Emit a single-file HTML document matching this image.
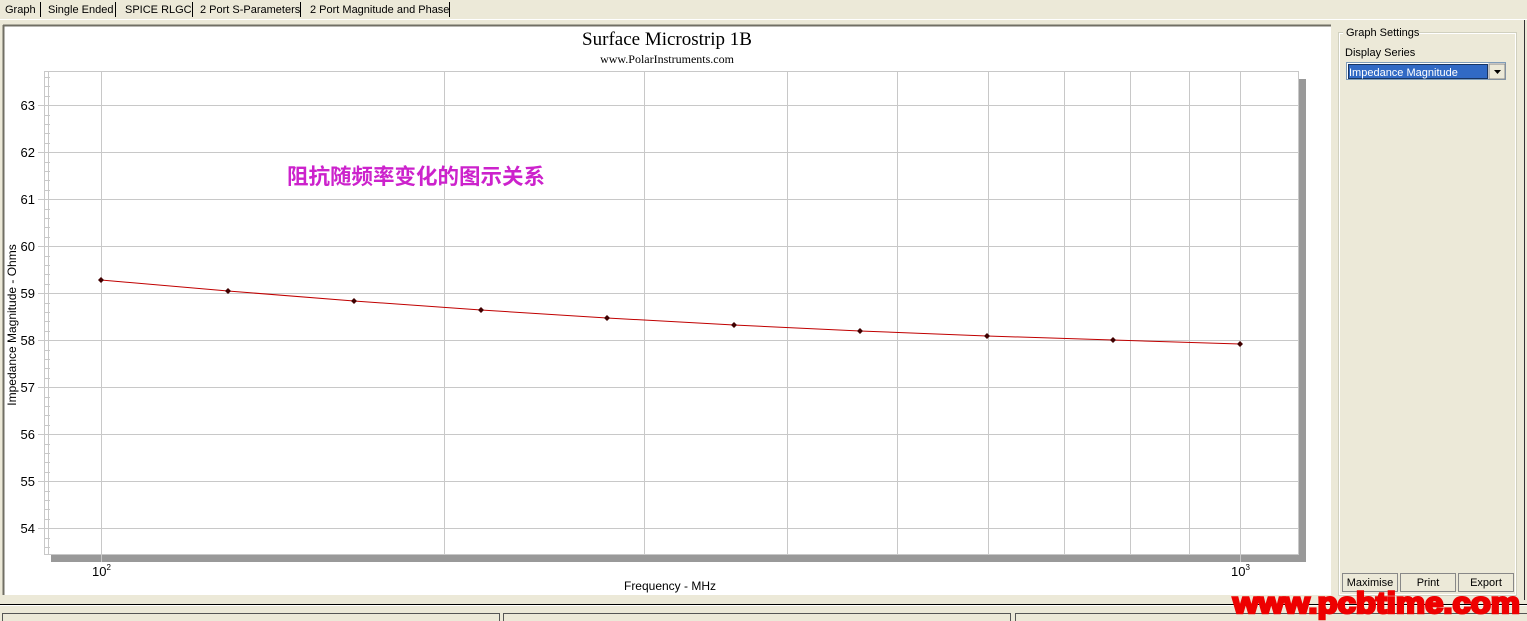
<!DOCTYPE html>
<html><head><meta charset="utf-8"><style>
html,body{margin:0;padding:0;background:#ECE9D8;width:1527px;height:621px;overflow:hidden}
svg{display:block}
</style></head><body>
<svg width="1527" height="621" xmlns="http://www.w3.org/2000/svg" font-family="Liberation Sans, sans-serif">
<rect width="1527" height="621" fill="#ECE9D8"/>
<g font-size="11" fill="#000">
<text x="5" y="13">Graph</text>
<text x="48" y="13">Single Ended</text>
<text x="125" y="13">SPICE RLGC</text>
<text x="200" y="13">2 Port S-Parameters</text>
<text x="310" y="13">2 Port Magnitude and Phase</text>
</g>
<g stroke="#000" stroke-width="1">
<line x1="40.5" y1="2" x2="40.5" y2="17"/><line x1="115.5" y1="2" x2="115.5" y2="17"/>
<line x1="192.5" y1="2" x2="192.5" y2="17"/><line x1="300.5" y1="2" x2="300.5" y2="17"/>
<line x1="449.5" y1="2" x2="449.5" y2="17"/>
</g>
<line x1="0" y1="19.5" x2="1527" y2="19.5" stroke="#fff"/>
<rect x="3" y="25" width="1328" height="570" fill="#fff"/>
<line x1="3" y1="25.5" x2="1331" y2="25.5" stroke="#716F64" stroke-width="2"/>
<line x1="3.5" y1="25" x2="3.5" y2="595" stroke="#716F64" stroke-width="2"/>
<text x="667" y="45" font-family="Liberation Serif, serif" font-size="19" text-anchor="middle">Surface Microstrip 1B</text>
<text x="667" y="63" font-family="Liberation Serif, serif" font-size="12" text-anchor="middle">www.PolarInstruments.com</text>
<rect x="1298" y="79" width="8" height="483" fill="#999"/>
<rect x="51" y="554" width="1255" height="8" fill="#999"/>
<g stroke="#C8C8C8" stroke-width="1" fill="none">
<rect x="44.5" y="71.5" width="1254" height="483"/>
<line x1="48.5" y1="71" x2="48.5" y2="555"/>
<g>
<line x1="38" y1="105.5" x2="1298" y2="105.5"/><line x1="38" y1="152.5" x2="1298" y2="152.5"/>
<line x1="38" y1="199.5" x2="1298" y2="199.5"/><line x1="38" y1="246.5" x2="1298" y2="246.5"/>
<line x1="38" y1="293.5" x2="1298" y2="293.5"/><line x1="38" y1="340.5" x2="1298" y2="340.5"/>
<line x1="38" y1="387.5" x2="1298" y2="387.5"/><line x1="38" y1="434.5" x2="1298" y2="434.5"/>
<line x1="38" y1="481.5" x2="1298" y2="481.5"/><line x1="38" y1="528.5" x2="1298" y2="528.5"/>
</g>
<g>
<line x1="101.5" y1="71" x2="101.5" y2="562"/><line x1="444.5" y1="71" x2="444.5" y2="555"/>
<line x1="644.5" y1="71" x2="644.5" y2="555"/><line x1="787.5" y1="71" x2="787.5" y2="555"/>
<line x1="897.5" y1="71" x2="897.5" y2="555"/><line x1="988.5" y1="71" x2="988.5" y2="555"/>
<line x1="1064.5" y1="71" x2="1064.5" y2="555"/><line x1="1130.5" y1="71" x2="1130.5" y2="555"/>
<line x1="1189.5" y1="71" x2="1189.5" y2="555"/><line x1="1240.5" y1="71" x2="1240.5" y2="562"/>
</g>
<path d="M44 77.5h6M44 86.5h6M44 96.5h6M44 115.5h6M44 124.5h6M44 133.5h6M44 143.5h6M44 162.5h6M44 171.5h6M44 180.5h6M44 190.5h6M44 209.5h6M44 218.5h6M44 227.5h6M44 237.5h6M44 256.5h6M44 265.5h6M44 274.5h6M44 284.5h6M44 303.5h6M44 312.5h6M44 321.5h6M44 331.5h6M44 350.5h6M44 359.5h6M44 368.5h6M44 378.5h6M44 397.5h6M44 406.5h6M44 415.5h6M44 425.5h6M44 444.5h6M44 453.5h6M44 462.5h6M44 472.5h6M44 491.5h6M44 500.5h6M44 509.5h6M44 519.5h6M44 538.5h6M44 547.5h6" shape-rendering="crispEdges"/>
</g>
<g font-size="13" fill="#000" text-anchor="end">
<text x="35" y="110">63</text><text x="35" y="157">62</text><text x="35" y="204">61</text>
<text x="35" y="251">60</text><text x="35" y="298">59</text><text x="35" y="345">58</text>
<text x="35" y="392">57</text><text x="35" y="439">56</text><text x="35" y="486">55</text>
<text x="35" y="533">54</text>
</g>
<text x="16" y="325" font-size="12" text-anchor="middle" transform="rotate(-90 16 325)">Impedance Magnitude - Ohms</text>
<text x="92" y="576" font-size="13">10<tspan font-size="8" dy="-6">2</tspan></text>
<text x="1231" y="576" font-size="13">10<tspan font-size="8" dy="-6">3</tspan></text>
<text x="670" y="590" font-size="12" text-anchor="middle">Frequency - MHz</text>
<text x="287" y="184" font-family="Noto Sans CJK SC, sans-serif" font-size="21.5" font-weight="bold" fill="#CC22CC">阻抗随频率变化的图示关系</text>
<polyline fill="none" stroke="#C00000" stroke-width="1" points="101,280 228,291 354,301 481,310 607,318 734,325 860,331 987,336 1113,340 1240,344"/>
<g fill="#400000">
<path d="M101 277l3 3-3 3-3-3z"/><path d="M228 288l3 3-3 3-3-3z"/><path d="M354 298l3 3-3 3-3-3z"/>
<path d="M481 307l3 3-3 3-3-3z"/><path d="M607 315l3 3-3 3-3-3z"/><path d="M734 322l3 3-3 3-3-3z"/>
<path d="M860 328l3 3-3 3-3-3z"/><path d="M987 333l3 3-3 3-3-3z"/><path d="M1113 337l3 3-3 3-3-3z"/>
<path d="M1240 341l3 3-3 3-3-3z"/>
</g>
<line x1="1524.5" y1="20" x2="1524.5" y2="600" stroke="#333"/>
<rect x="1338.5" y="32.5" width="178" height="563" fill="none" stroke="#D0D0BF"/>
<rect x="1339.5" y="33.5" width="176" height="561" fill="none" stroke="#fff"/>
<rect x="1343" y="26" width="76" height="12" fill="#ECE9D8"/>
<text x="1346" y="36" font-size="11">Graph Settings</text>
<text x="1345" y="56" font-size="11">Display Series</text>
<rect x="1346.5" y="62.5" width="159" height="17" fill="#fff" stroke="#7F9DB9"/>
<rect x="1348" y="64" width="140" height="15" fill="#316AC5"/>
<rect x="1348.5" y="64.5" width="139" height="14" fill="none" stroke="#000" stroke-dasharray="1 1"/>
<text x="1349" y="76" font-size="11" fill="#fff">Impedance Magnitude</text>
<rect x="1489" y="64" width="16" height="15" fill="#ECE9D8" stroke="#888"/>
<path d="M1494 70h7l-3.5 4z" fill="#000"/>
<g font-size="11" text-anchor="middle">
<rect x="1342.5" y="573.5" width="55" height="18" fill="#ECE9D8" stroke="#888"/><text x="1370" y="586">Maximise</text>
<rect x="1400.5" y="573.5" width="55" height="18" fill="#ECE9D8" stroke="#888"/><text x="1428" y="586">Print</text>
<rect x="1458.5" y="573.5" width="55" height="18" fill="#ECE9D8" stroke="#888"/><text x="1486" y="586">Export</text>
</g>
<line x1="0" y1="604.5" x2="1527" y2="604.5" stroke="#000"/>
<line x1="0" y1="605.5" x2="1527" y2="605.5" stroke="#fff"/>
<rect x="2.5" y="613.5" width="497" height="10" fill="none" stroke="#555"/>
<rect x="503.5" y="613.5" width="507" height="10" fill="none" stroke="#555"/>
<rect x="1015.5" y="613.5" width="512" height="10" fill="none" stroke="#555"/>
<text x="1233" y="613" font-size="30" font-weight="bold" fill="#EE0000" textLength="287" lengthAdjust="spacingAndGlyphs" stroke="#EE0000" stroke-width="2.5">www.pcbtime.com</text>
</svg>
</body></html>
